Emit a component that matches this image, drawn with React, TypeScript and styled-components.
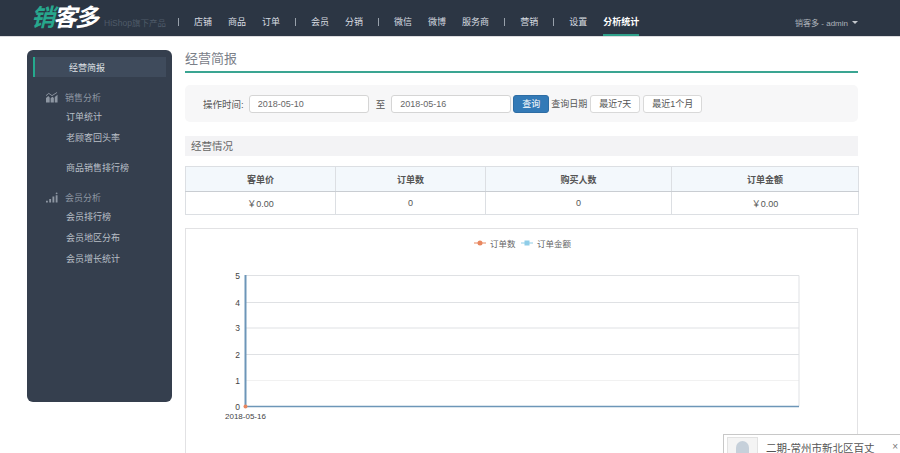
import styled, { createGlobalStyle } from 'styled-components';
import { FC, Fragment } from 'react';

const cjk = `"Liberation Sans", "Noto Sans CJK SC", sans-serif`;

const GlobalStyle = createGlobalStyle`
  html, body {
    margin: 0;
    padding: 0;
    background: #fff;
    overflow: hidden;
    font-family: ${cjk};
  }
`;

const Page = styled.div`
  position: relative;
  width: 900px;
  height: 453px;
  overflow: hidden;
`;

const Header = styled.header`
  display: flex;
  align-items: stretch;
  height: 36px;
  padding-left: 31px;
  padding-right: 42px;
  background: #2c3644;
  border-bottom: 1px solid #dcdcdf;
`;

const Logo = styled.div`
  display: flex;
  align-items: center;
  width: 73px;
  font-size: 24px;
  font-weight: 700;
  font-style: italic;
  letter-spacing: -2px;
  line-height: 1;
  color: #fff;
  white-space: nowrap;

  span {
    color: #27a78d;
  }
`;

const Slogan = styled.div`
  align-self: center;
  width: 75px;
  padding-top: 8px;
  font-size: 8.5px;
  color: #4f5b69;
  white-space: nowrap;
`;

const Nav = styled.nav`
  display: flex;
  flex: 1;
  gap: 16px;
  align-items: stretch;
`;

const NavItem = styled.a<{ $active?: boolean }>`
  display: flex;
  align-items: center;
  padding-top: 8px;
  font-size: 9px;
  font-weight: ${({ $active }) => ($active ? 700 : 400)};
  color: ${({ $active }) => ($active ? '#fff' : '#d9dde2')};
  border-bottom: 2px solid ${({ $active }) => ($active ? '#2fa08a' : 'transparent')};
  white-space: nowrap;
`;

const NavDivider = styled.span`
  align-self: center;
  width: 1px;
  height: 8px;
  margin: 8px -1px 0;
  background: #98a1ab;
`;

const UserMenu = styled.div`
  display: flex;
  align-items: center;
  gap: 4px;
  padding-top: 8px;
  font-size: 8px;
  color: #aeb4bb;
  white-space: nowrap;

  &::after {
    content: '';
    border-left: 3px solid transparent;
    border-right: 3px solid transparent;
    border-top: 3px solid #c4c8cd;
  }
`;

const Body = styled.div`
  display: flex;
  align-items: flex-start;
  gap: 13px;
  padding: 13px 0 0 27px;
`;

const Sidebar = styled.aside`
  box-sizing: border-box;
  width: 145px;
  height: 352px;
  padding-top: 7px;
  background: #353f4e;
  border-radius: 6px;
`;

const ActiveItem = styled.div`
  box-sizing: border-box;
  display: flex;
  align-items: center;
  width: 133px;
  height: 20px;
  margin-left: 6px;
  padding-left: 34px;
  font-size: 9px;
  color: #dfe2e6;
  background: #3f4b5c;
  border-left: 2px solid #25a98d;
`;

const Group = styled.div<{ $gap?: number }>`
  display: flex;
  flex-direction: column;
  margin-top: ${({ $gap }) => $gap ?? 10}px;
`;

const GroupTitle = styled.div`
  display: flex;
  align-items: center;
  gap: 7px;
  height: 20px;
  padding-left: 19px;
  font-size: 9px;
  color: #8d96a2;

  svg {
    width: 12px;
    height: 11px;
  }
`;

const SideLink = styled.a<{ $gap?: number }>`
  display: block;
  height: 21px;
  margin-top: ${({ $gap }) => $gap ?? 0}px;
  padding-left: 39px;
  font-size: 9px;
  line-height: 21px;
  color: #b9bfc7;
`;

const Main = styled.main`
  width: 673px;
`;

const PageTitle = styled.h1`
  box-sizing: border-box;
  height: 23px;
  margin: 0 0 12px;
  font-size: 13px;
  font-weight: 400;
  line-height: 18px;
  color: #7a8089;
  border-bottom: 2px solid #3aa592;
`;

const FilterBar = styled.div`
  box-sizing: border-box;
  display: flex;
  align-items: center;
  height: 37px;
  padding-left: 18px;
  font-size: 9.5px;
  color: #555;
  background: #f7f7f8;
  border-radius: 5px;
`;

const DateInput = styled.input`
  box-sizing: border-box;
  width: 120px;
  height: 18px;
  padding: 0 8px;
  font-family: ${cjk};
  font-size: 9px;
  color: #666;
  background: #fff;
  border: 1px solid #d5d5d5;
  border-radius: 3px;
`;

const FilterLabel = styled.span`
  margin-right: 5px;
  white-space: nowrap;
`;

const FilterTo = styled.span`
  margin: 0 6px 0 7px;
`;

const FilterHint = styled.span`
  font-size: 9px;
  white-space: nowrap;
`;

const PrimaryButton = styled.button`
  width: 36px;
  height: 18px;
  margin: 0 2px;
  padding: 0;
  font-family: ${cjk};
  font-size: 9px;
  color: #fff;
  background: #337ab7;
  border: 1px solid #2e6da4;
  border-radius: 3px;
`;

const DefaultButton = styled.button`
  height: 18px;
  margin-left: 3px;
  padding: 0 8px;
  font-family: ${cjk};
  font-size: 9px;
  color: #555;
  background: #fff;
  border: 1px solid #d9d9d9;
  border-radius: 3px;
  white-space: nowrap;
`;

const SectionTitle = styled.h2`
  height: 20px;
  margin: 14px 0 10px;
  padding-left: 6px;
  font-size: 10.5px;
  font-weight: 400;
  line-height: 20px;
  color: #666;
  background: #f3f3f5;
`;

const StatsTable = styled.table`
  width: 673px;
  table-layout: fixed;
  border-collapse: collapse;
  font-size: 9px;
  color: #555;
  text-align: center;

  th, td {
    border: 1px solid #dcdfe3;
    padding: 0;
  }

  th {
    height: 24px;
    font-weight: 700;
    background: #f3f8fc;
    border-bottom-color: #c9cdd2;
  }

  td {
    height: 22px;
  }
`;

const ChartCard = styled.section`
  box-sizing: border-box;
  height: 240px;
  margin-top: 13px;
  border: 1px solid #e2e2e4;
`;

const ChartSvg = styled.svg`
  display: block;
`;

const Popup = styled.div`
  position: absolute;
  left: 723px;
  top: 434px;
  display: flex;
  gap: 8px;
  width: 177px;
  height: 40px;
  padding: 2px 3px;
  box-sizing: border-box;
  background: #fff;
  border: 1px solid #c8c8c8;
  border-right: 0;
`;

const Avatar = styled.div`
  position: relative;
  width: 29px;
  height: 30px;
  overflow: hidden;
  background: #f4f4f4;
  border: 1px solid #e2e2e2;

  &::after {
    content: '';
    position: absolute;
    left: 8px;
    top: 3px;
    width: 13px;
    height: 24px;
    border-radius: 7px;
    background: #c6d0da;
  }
`;

const PopupText = styled.div`
  padding-top: 3px;
  font-size: 10.5px;
  line-height: 16px;
  color: #555;
  white-space: nowrap;
`;

const PopupClose = styled.span`
  position: absolute;
  right: 2px;
  top: 6px;
  font-size: 10px;
  line-height: 12px;
  color: #777;
`;

const navGroups = [
  ['店铺', '商品', '订单'],
  ['会员', '分销'],
  ['微信', '微博', '服务商'],
  ['营销'],
];

const TopNav: FC = () => (
  <Nav>
    {navGroups.map((group) => (
      <Fragment key={group[0]}>
        <NavDivider />
        {group.map((label) => (
          <NavItem key={label}>{label}</NavItem>
        ))}
      </Fragment>
    ))}
    <NavDivider />
    <NavItem>设置</NavItem>
    <NavItem $active>分析统计</NavItem>
  </Nav>
);

const SalesIcon: FC = () => (
  <svg viewBox="0 0 13 11" fill="#8d96a2">
    <path d="M0 11V6l2.5-2 1.500 1.500V11zM5 11V6.200l2-1.400 1.500 1.200V11zM9.500 11V5l3-2.500V11z" />
    <path d="M0 3.500 3 1l3.500 2.500L12 0" fill="none" stroke="#8d96a2" strokeWidth="1" />
  </svg>
);

const MemberIcon: FC = () => (
  <svg viewBox="0 0 13 11" fill="#8d96a2">
    <path d="M0 9h2v2H0zM3.500 7h2v4h-2zM7 4.500h2V11H7zM10.500 3h2v8h-2z" />
    <circle cx="11.500" cy="1" r="1" />
  </svg>
);

const ChartFigure: FC = () => {
  const rows = [
    { label: '5', y: 46.5 },
    { label: '4', y: 73.5 },
    { label: '3', y: 99 },
    { label: '2', y: 125.5 },
    { label: '1', y: 151.5 },
    { label: '0', y: 177.5 },
  ];
  return (
    <ChartSvg width="671" height="238" fontFamily={cjk}>
      <line x1="288" x2="300" y1="14" y2="14" stroke="#e8875f" strokeWidth="1" />
      <circle cx="294" cy="14" r="2.500" fill="#e8875f" />
      <text x="304" y="17.500" fontSize="8.500" fill="#666">订单数</text>
      <line x1="335" x2="347" y1="14" y2="14" stroke="#8fcde8" strokeWidth="1" />
      <rect x="338.500" y="11.500" width="5" height="5" fill="#8fcde8" />
      <text x="351" y="17.500" fontSize="8.500" fill="#666">订单金额</text>

      {rows.map(({ label, y }) => (
        <Fragment key={label}>
          <line x1="59" x2="613" y1={y} y2={y} stroke={label === '1' ? '#f1f1f1' : '#dfe1e4'} strokeWidth="1" />
          <text x="54" y={y + 3} fontSize="8.500" textAnchor="end" fill="#444">{label}</text>
        </Fragment>
      ))}
      <line x1="613" x2="613" y1="46.500" y2="177.500" stroke="#dfe1e4" strokeWidth="1" />
      <line x1="59.500" x2="59.500" y1="46" y2="178" stroke="#6d96b8" strokeWidth="2" />
      <line x1="59" x2="613" y1="177.500" y2="177.500" stroke="#6d96b8" strokeWidth="1.500" />
      <circle cx="59.500" cy="177.500" r="2" fill="#e8875f" />
      <text x="39" y="190" fontSize="8" fill="#444">2018-05-16</text>
    </ChartSvg>
  );
};

const App: FC = () => (
  <Page>
    <GlobalStyle />
    <Header>
      <Logo>
        <span>销</span>客多
      </Logo>
      <Slogan>HiShop旗下产品</Slogan>
      <TopNav />
      <UserMenu>销客多 - admin</UserMenu>
    </Header>
    <Body>
      <Sidebar>
        <ActiveItem>经营简报</ActiveItem>
        <Group>
          <GroupTitle>
            <SalesIcon />
            销售分析
          </GroupTitle>
          <SideLink>订单统计</SideLink>
          <SideLink>老顾客回头率</SideLink>
          <SideLink $gap={9}>商品销售排行榜</SideLink>
        </Group>
        <Group $gap={8}>
          <GroupTitle>
            <MemberIcon />
            会员分析
          </GroupTitle>
          <SideLink>会员排行榜</SideLink>
          <SideLink>会员地区分布</SideLink>
          <SideLink>会员增长统计</SideLink>
        </Group>
      </Sidebar>
      <Main>
        <PageTitle>经营简报</PageTitle>
        <FilterBar>
          <FilterLabel>操作时间:</FilterLabel>
          <DateInput defaultValue="2018-05-10" />
          <FilterTo>至</FilterTo>
          <DateInput defaultValue="2018-05-16" />
          <PrimaryButton>查询</PrimaryButton>
          <FilterHint>查询日期</FilterHint>
          <DefaultButton>最近7天</DefaultButton>
          <DefaultButton>最近1个月</DefaultButton>
        </FilterBar>
        <SectionTitle>经营情况</SectionTitle>
        <StatsTable>
          <colgroup>
            <col width="150" />
            <col width="150" />
            <col width="186" />
            <col width="187" />
          </colgroup>
          <thead>
            <tr>
              <th>客单价</th>
              <th>订单数</th>
              <th>购买人数</th>
              <th>订单金额</th>
            </tr>
          </thead>
          <tbody>
            <tr>
              <td>￥0.00</td>
              <td>0</td>
              <td>0</td>
              <td>￥0.00</td>
            </tr>
          </tbody>
        </StatsTable>
        <ChartCard>
          <ChartFigure />
        </ChartCard>
      </Main>
    </Body>
    <Popup>
      <Avatar />
      <PopupText>二期-常州市新北区百丈</PopupText>
      <PopupClose>×</PopupClose>
    </Popup>
  </Page>
);

export default App;
